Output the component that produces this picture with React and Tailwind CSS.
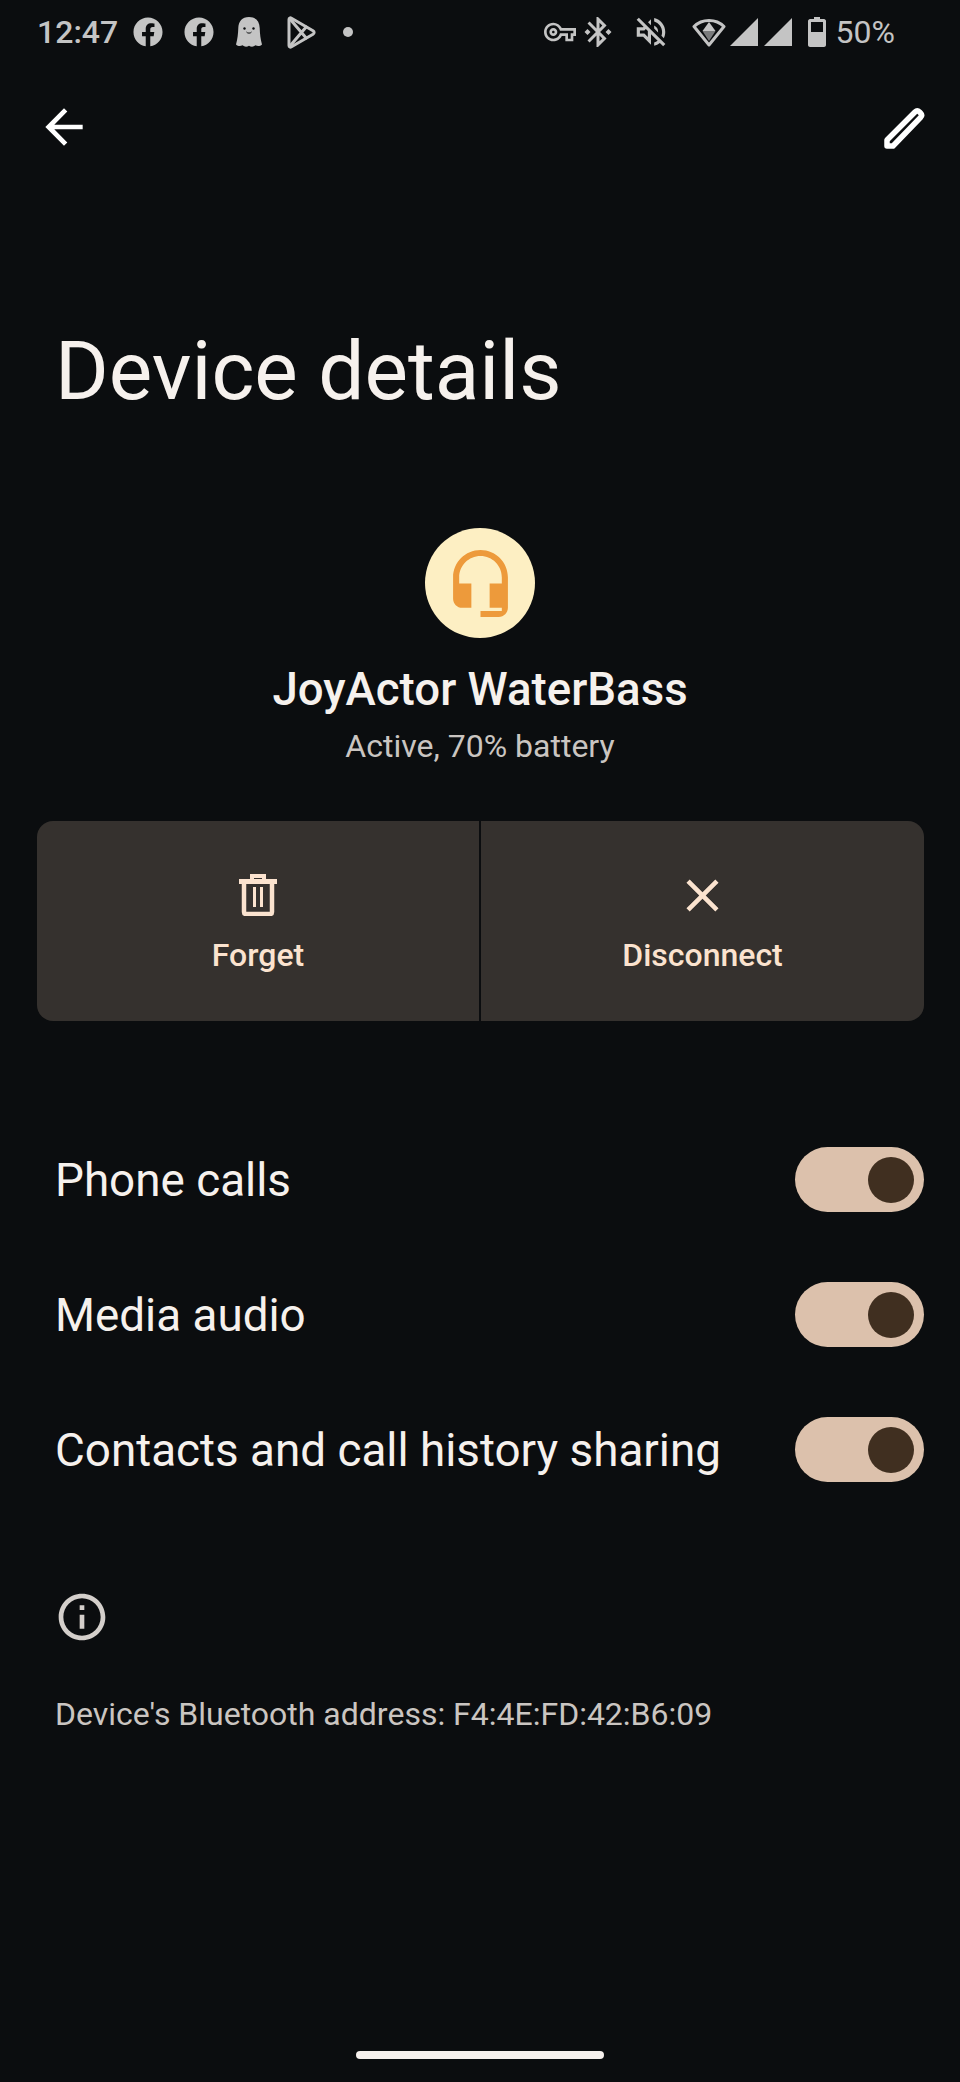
import { MdArrowBack, MdClose, MdInfoOutline, MdOutlineVolumeOff, MdBluetoothConnected, MdOutlineVpnKey } from 'react-icons/md'
import { FaFacebook } from 'react-icons/fa'

function Ghost({ className }) {
  return (
    <svg viewBox="0 0 26 30" className={className} fill="currentColor">
      <path d="M13 0C6 0 2.500 4.500 2.300 11 2.100 17 1.500 22 0 27.500c2 2 4.500 2 6.500.8 2 1.700 4.500 1.700 6.500.4 2 1.300 4.500 1.300 6.500-.4 2 1.200 4.500 1.200 6.500-.8-1.500-5.500-2.100-10.500-2.300-16.500C23.500 4.500 20 0 13 0z" />
      <circle cx="8.500" cy="11.500" r="1.200" fill="#0b0d0f" />
      <circle cx="17.500" cy="11.500" r="1.200" fill="#0b0d0f" />
      <path d="M10.500 15c1 1.500 4 1.500 5 0" fill="none" stroke="#0b0d0f" strokeWidth="1" />
    </svg>
  )
}

function PlayOutline({ className }) {
  return (
    <svg viewBox="0 0 30 33" className={className} fill="none" stroke="currentColor" strokeWidth="3" strokeLinejoin="round">
      <path d="M3 3.500c0-1.500 1.200-2 2.500-1.300L27 14.800c1.500 1 1.500 2.400 0 3.400L5.500 30.800C4.200 31.500 3 31 3 29.500z" />
      <path d="M4 3l17 20M4 30l17-20" />
    </svg>
  )
}

function WifiIcon({ className }) {
  return (
    <svg viewBox="0 0 34 30" className={className}>
      <path d="M17 28L2 9.500C10 1.500 24 1.500 32 9.500z" fill="none" stroke="currentColor" strokeWidth="3" strokeLinejoin="round" />
      <path d="M17 5l-6.500 9h13z" fill="currentColor" />
      <path d="M10.500 14h13L17 24z" fill="currentColor" opacity="0.6" />
    </svg>
  )
}

function Signal({ className }) {
  return (
    <svg viewBox="0 0 28 28" className={className} fill="currentColor">
      <path d="M28 0v28H0z" />
    </svg>
  )
}

function Battery({ className }) {
  return (
    <svg viewBox="0 0 18 30" className={className}>
      <path d="M6 0h6v2h4c1 0 2 1 2 2v24c0 1-1 2-2 2H2c-1 0-2-1-2-2V4c0-1 1-2 2-2h4z" fill="currentColor" />
      <rect x="3" y="5" width="12" height="10" fill="#0b0d0f" />
    </svg>
  )
}

function Pencil({ className }) {
  return (
    <svg viewBox="0 0 42 43" className={className} fill="none" stroke="currentColor" strokeWidth="5.500" strokeLinejoin="round">
      <path d="M3 40v-6L31 6c1.500-1.500 3-1.500 4.500 0l1 1c1.500 1.500 1.500 3 0 4.500L9 40z" />
    </svg>
  )
}

function Trash({ className }) {
  return (
    <svg viewBox="0 0 38 42" className={className} fill="none" stroke="currentColor">
      <path d="M0 7.500h38" strokeWidth="5" />
      <path d="M13 6V2h12v4" strokeWidth="4" />
      <path d="M5 7v31c0 1.500 1 2 2 2h24c1 0 2-.500 2-2V7" strokeWidth="4.500" />
      <path d="M15.500 13v20M22.500 13v20" strokeWidth="3" />
    </svg>
  )
}

function Headset({ className }) {
  return (
    <svg viewBox="3 1 18 22" className={className} fill="currentColor">
      <path d="M12 1c-4.970 0-9 4.030-9 9v7c0 1.660 1.340 3 3 3h3v-8H5v-2c0-3.870 3.130-7 7-7s7 3.130 7 7v2h-4v8h4v1h-7v2h6c1.660 0 3-1.340 3-3V10c0-4.970-4.030-9-9-9z" />
    </svg>
  )
}

function ToggleRow({ label }) {
  return (
    <div className="flex h-[135px] items-center justify-between pl-[55px] pr-[36px]">
      <span className="mt-[2px] text-[45.8px] leading-none text-[#f6f1ed]">{label}</span>
      <div className="flex h-[65px] w-[129px] items-center justify-end rounded-full bg-[#dcc1ac] pr-[10px]">
        <div className="h-[46px] w-[46px] rounded-full bg-[#402f20]" />
      </div>
    </div>
  )
}

function ActionButton({ label, className, children }) {
  return (
    <div className={`flex flex-col items-center bg-[#35312e] pt-[52px] text-[#fbe3cf] ${className}`}>
      <div className="flex h-[44px] items-center justify-center">{children}</div>
      <span className="mt-[20px] text-[32px] leading-[36px] font-medium">{label}</span>
    </div>
  )
}

export default function App() {
  return (
    <div className="flex h-[2082px] w-[960px] flex-col overflow-hidden bg-[#0b0d0f] font-['Roboto',sans-serif]">
      {/* status bar */}
      <div className="flex h-[64px] shrink-0 items-center justify-between pr-[65px] pl-[37px] text-[#c4c4c4]">
        <div className="flex items-center">
          <span className="text-[32px] leading-none font-medium">12:47</span>
          <FaFacebook className="ml-[15px] h-[30px] w-[30px]" />
          <FaFacebook className="ml-[21px] h-[30px] w-[30px]" />
          <Ghost className="ml-[22px] h-[30px] w-[26px]" />
          <PlayOutline className="ml-[24px] h-[33px] w-[30px]" />
          <div className="ml-[27px] h-[10px] w-[10px] rounded-full bg-[#c4c4c4]" />
        </div>
        <div className="flex items-center">
          <MdOutlineVpnKey className="h-[32px] w-[32px]" />
          <MdBluetoothConnected className="ml-[4px] h-[36px] w-[36px]" />
          <MdOutlineVolumeOff className="ml-[16px] h-[38px] w-[38px]" />
          <WifiIcon className="ml-[22px] h-[30px] w-[34px]" />
          <Signal className="ml-[4px] h-[28px] w-[28px]" />
          <Signal className="ml-[6px] h-[28px] w-[28px]" />
          <Battery className="ml-[16px] h-[30px] w-[18px]" />
          <span className="ml-[10px] text-[32px] leading-none">50%</span>
        </div>
      </div>

      {/* toolbar */}
      <div className="flex h-[126px] shrink-0 items-center justify-between pr-[34px] pl-[36px] text-white">
        <MdArrowBack className="h-[56px] w-[56px]" />
        <Pencil className="h-[43px] w-[42px]" />
      </div>

      <h1 className="mt-[131px] shrink-0 pl-[55px] text-[82px] leading-[100px] font-normal text-[#f6f1ed]">Device details</h1>

      <div className="mt-[107px] flex shrink-0 flex-col items-center">
        <div className="flex h-[110px] w-[110px] items-center justify-center rounded-full bg-[#fdefc3] text-[#ed9a3b]">
          <Headset className="h-[67px] w-[55px]" />
        </div>
        <div className="mt-[26px] text-[45.6px] leading-[52px] font-medium text-[#f6f1ed]">JoyActor WaterBass</div>
        <div className="mt-[10px] text-[32px] leading-[40px] text-[#cac5c1]">Active, 70% battery</div>
      </div>

      <div className="mt-[55px] mr-[36px] ml-[37px] flex h-[200px] shrink-0 gap-[2px] overflow-hidden rounded-[16px]">
        <ActionButton label="Forget" className="w-[442px]">
          <Trash className="h-[42px] w-[38px]" />
        </ActionButton>
        <ActionButton label="Disconnect" className="flex-1">
          <MdClose className="h-[55px] w-[55px]" />
        </ActionButton>
      </div>

      <div className="mt-[91px] flex shrink-0 flex-col">
        <ToggleRow label="Phone calls" />
        <ToggleRow label="Media audio" />
        <ToggleRow label="Contacts and call history sharing" />
      </div>

      <div className="mt-[72px] shrink-0 pl-[54px]">
        <MdInfoOutline className="h-[56px] w-[56px] text-[#d4cfcb]" />
      </div>
      <div className="mt-[49px] shrink-0 pl-[55px] text-[32px] leading-[40px] text-[#cac5c1]">Device's Bluetooth address: F4:4E:FD:42:B6:09</div>

      <div className="mt-auto mb-[23px] flex shrink-0 justify-center">
        <div className="h-[8px] w-[248px] rounded-full bg-[#f6f1ed]" />
      </div>
    </div>
  )
}
